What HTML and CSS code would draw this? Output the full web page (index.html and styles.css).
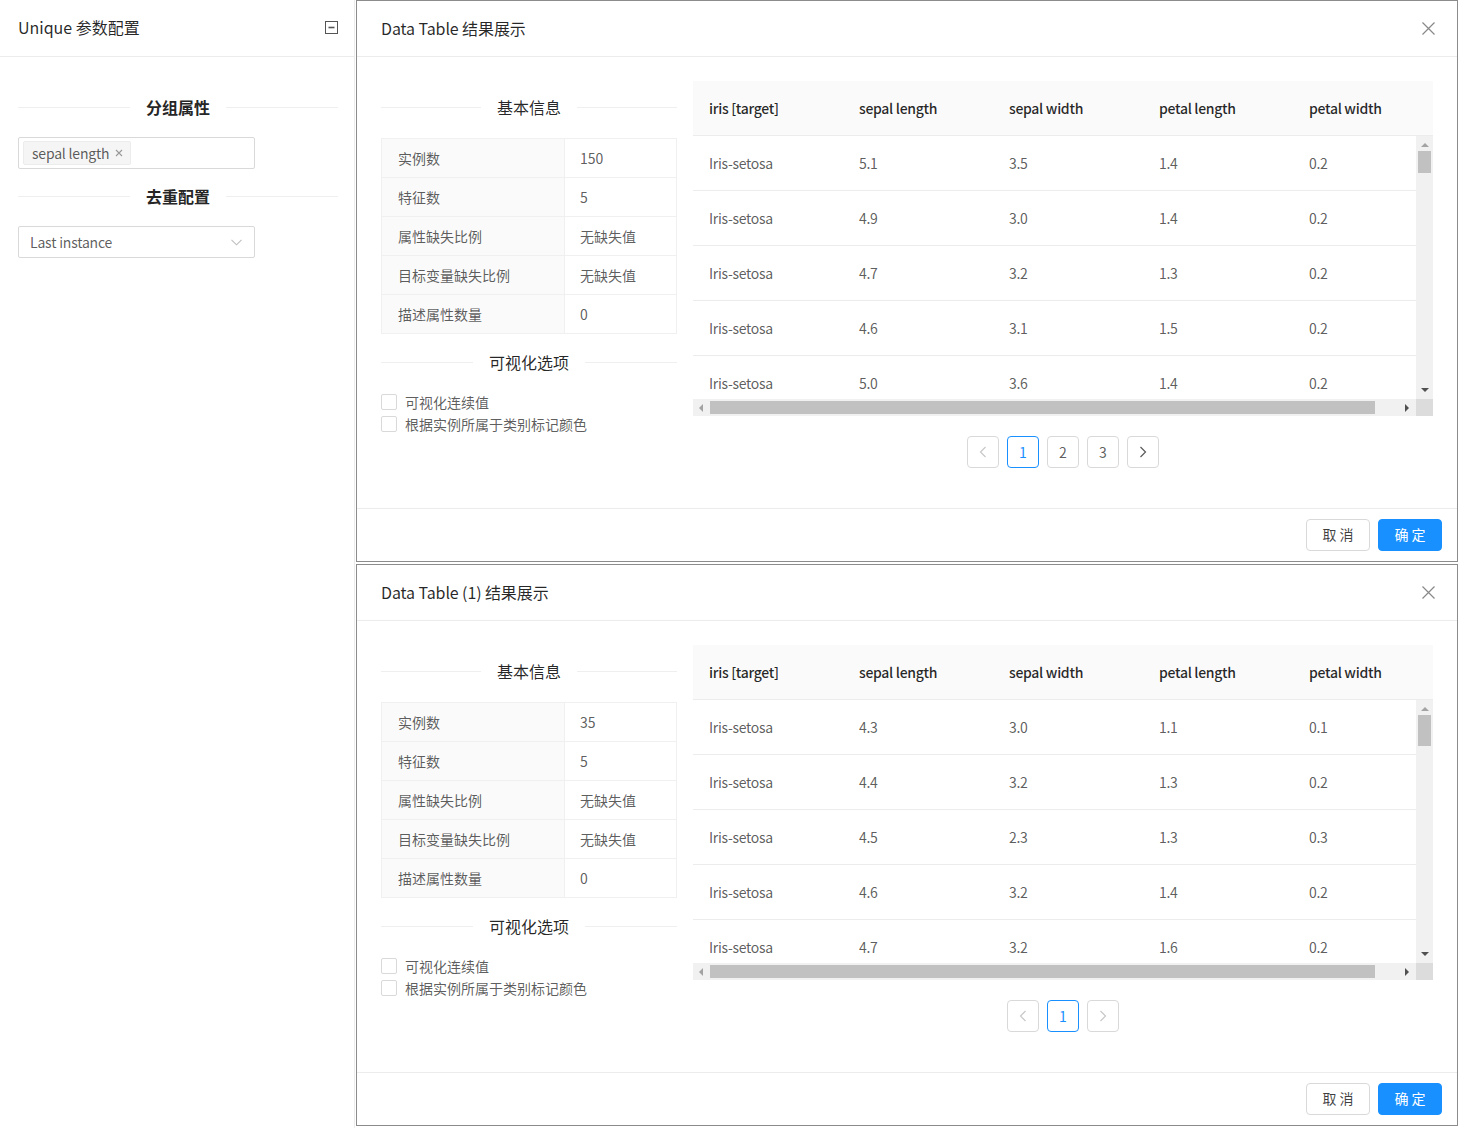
FILE: index.html
```html
<!DOCTYPE html>
<html lang="zh-CN">
<head>
<meta charset="utf-8">
<title>Unique 参数配置</title>
<link rel="stylesheet" href="styles.css">
</head>
<body>
<div class="app">
  <aside class="panel">
    <div class="panel-head">
      <span class="panel-title">Unique 参数配置</span>
      <svg class="collapse" width="13" height="13" viewBox="0 0 13 13"><rect x="0.5" y="0.5" width="12" height="12" fill="none" stroke="#555" stroke-width="1"/><path d="M3.5 6.5h6" stroke="#555" stroke-width="1.6"/></svg>
    </div>
    <div class="panel-body">
      <div class="divider strong"><span>分组属性</span></div>
      <div class="field">
        <span class="tag">sepal length<svg class="tag-x" width="8" height="8" viewBox="0 0 8 8"><path d="M1 1l6 6M7 1l-6 6" stroke="#999" stroke-width="1.1"/></svg></span>
      </div>
      <div class="divider strong"><span>去重配置</span></div>
      <div class="field select">
        <span>Last instance</span>
        <svg width="11" height="7" viewBox="0 0 11 7"><path d="M0.5 0.8l5 5 5-5" fill="none" stroke="#bfbfbf" stroke-width="1.1"/></svg>
      </div>
    </div>
  </aside>

  <main class="modals">
    <section class="modal">
      <header class="modal-head">
        <span class="modal-title">Data Table 结果展示</span>
        <svg class="close" width="13" height="13" viewBox="0 0 13 13"><path d="M0.5 0.5l12 12M12.5 0.5l-12 12" stroke="#888" stroke-width="1.2"/></svg>
      </header>
      <div class="modal-body">
        <div class="info">
          <div class="divider first"><span>基本信息</span></div>
          <div class="kv">
            <div class="kv-row"><div class="k">实例数</div><div class="v">150</div></div>
            <div class="kv-row"><div class="k">特征数</div><div class="v">5</div></div>
            <div class="kv-row"><div class="k">属性缺失比例</div><div class="v">无缺失值</div></div>
            <div class="kv-row"><div class="k">目标变量缺失比例</div><div class="v">无缺失值</div></div>
            <div class="kv-row"><div class="k">描述属性数量</div><div class="v">0</div></div>
          </div>
          <div class="divider second"><span>可视化选项</span></div>
          <label class="check"><span class="box"></span>可视化连续值</label>
          <label class="check"><span class="box"></span>根据实例所属于类别标记颜色</label>
        </div>
        <div class="data">
          <div class="grid">
            <div class="grid-head">
              <div class="c">iris [target]</div><div class="c">sepal length</div><div class="c">sepal width</div><div class="c">petal length</div><div class="c">petal width</div>
            </div>
            <div class="grid-mid">
              <div class="grid-body">
                <div class="r"><div class="c">Iris-setosa</div><div class="c">5.1</div><div class="c">3.5</div><div class="c">1.4</div><div class="c">0.2</div></div>
                <div class="r"><div class="c">Iris-setosa</div><div class="c">4.9</div><div class="c">3.0</div><div class="c">1.4</div><div class="c">0.2</div></div>
                <div class="r"><div class="c">Iris-setosa</div><div class="c">4.7</div><div class="c">3.2</div><div class="c">1.3</div><div class="c">0.2</div></div>
                <div class="r"><div class="c">Iris-setosa</div><div class="c">4.6</div><div class="c">3.1</div><div class="c">1.5</div><div class="c">0.2</div></div>
                <div class="r"><div class="c">Iris-setosa</div><div class="c">5.0</div><div class="c">3.6</div><div class="c">1.4</div><div class="c">0.2</div></div>
              </div>
              <div class="vbar"><span class="tri up"></span><span class="vthumb"></span><span class="vfill"></span><span class="tri down"></span></div>
            </div>
            <div class="grid-foot">
              <div class="hbar"><span class="tri left"></span><span class="hthumb"></span><span class="tri right"></span></div>
              <div class="corner"></div>
            </div>
          </div>
          <nav class="pager">
            <span class="pg off"><svg width="8" height="12" viewBox="0 0 8 12"><path d="M6.5 1l-5 5 5 5" fill="none" stroke="currentColor" stroke-width="1.2"/></svg></span>
            <span class="pg on">1</span>
            <span class="pg">2</span>
            <span class="pg">3</span>
            <span class="pg"><svg width="8" height="12" viewBox="0 0 8 12"><path d="M1.5 1l5 5-5 5" fill="none" stroke="currentColor" stroke-width="1.2"/></svg></span>
          </nav>
        </div>
      </div>
      <footer class="modal-foot">
        <button class="btn">取 消</button>
        <button class="btn primary">确 定</button>
      </footer>
    </section>

    <section class="modal">
      <header class="modal-head">
        <span class="modal-title">Data Table (1) 结果展示</span>
        <svg class="close" width="13" height="13" viewBox="0 0 13 13"><path d="M0.5 0.5l12 12M12.5 0.5l-12 12" stroke="#888" stroke-width="1.2"/></svg>
      </header>
      <div class="modal-body">
        <div class="info">
          <div class="divider first"><span>基本信息</span></div>
          <div class="kv">
            <div class="kv-row"><div class="k">实例数</div><div class="v">35</div></div>
            <div class="kv-row"><div class="k">特征数</div><div class="v">5</div></div>
            <div class="kv-row"><div class="k">属性缺失比例</div><div class="v">无缺失值</div></div>
            <div class="kv-row"><div class="k">目标变量缺失比例</div><div class="v">无缺失值</div></div>
            <div class="kv-row"><div class="k">描述属性数量</div><div class="v">0</div></div>
          </div>
          <div class="divider second"><span>可视化选项</span></div>
          <label class="check"><span class="box"></span>可视化连续值</label>
          <label class="check"><span class="box"></span>根据实例所属于类别标记颜色</label>
        </div>
        <div class="data">
          <div class="grid">
            <div class="grid-head">
              <div class="c">iris [target]</div><div class="c">sepal length</div><div class="c">sepal width</div><div class="c">petal length</div><div class="c">petal width</div>
            </div>
            <div class="grid-mid">
              <div class="grid-body">
                <div class="r"><div class="c">Iris-setosa</div><div class="c">4.3</div><div class="c">3.0</div><div class="c">1.1</div><div class="c">0.1</div></div>
                <div class="r"><div class="c">Iris-setosa</div><div class="c">4.4</div><div class="c">3.2</div><div class="c">1.3</div><div class="c">0.2</div></div>
                <div class="r"><div class="c">Iris-setosa</div><div class="c">4.5</div><div class="c">2.3</div><div class="c">1.3</div><div class="c">0.3</div></div>
                <div class="r"><div class="c">Iris-setosa</div><div class="c">4.6</div><div class="c">3.2</div><div class="c">1.4</div><div class="c">0.2</div></div>
                <div class="r"><div class="c">Iris-setosa</div><div class="c">4.7</div><div class="c">3.2</div><div class="c">1.6</div><div class="c">0.2</div></div>
              </div>
              <div class="vbar"><span class="tri up"></span><span class="vthumb big"></span><span class="vfill"></span><span class="tri down"></span></div>
            </div>
            <div class="grid-foot">
              <div class="hbar"><span class="tri left"></span><span class="hthumb"></span><span class="tri right"></span></div>
              <div class="corner"></div>
            </div>
          </div>
          <nav class="pager">
            <span class="pg off"><svg width="8" height="12" viewBox="0 0 8 12"><path d="M6.5 1l-5 5 5 5" fill="none" stroke="currentColor" stroke-width="1.2"/></svg></span>
            <span class="pg on">1</span>
            <span class="pg off"><svg width="8" height="12" viewBox="0 0 8 12"><path d="M1.5 1l5 5-5 5" fill="none" stroke="currentColor" stroke-width="1.2"/></svg></span>
          </nav>
        </div>
      </div>
      <footer class="modal-foot">
        <button class="btn">取 消</button>
        <button class="btn primary">确 定</button>
      </footer>
    </section>
  </main>
</div>
</body>
</html>
```
FILE: styles.css
```css
* { box-sizing: border-box; }
html, body { margin: 0; padding: 0; }
body {
  width: 1460px;
  height: 1128px;
  overflow: hidden;
  background: #fff;
  font-family: "Noto Sans CJK SC", "Noto Sans", sans-serif;
  font-size: 14px;
  color: rgba(0,0,0,.65);
}
.app { display: flex; height: 1128px; }

/* left panel */
.panel {
  width: 355px;
  flex: none;
  border-right: 1px solid #ececec;
}
.panel-head {
  height: 57px;
  border-bottom: 1px solid #ececec;
  display: flex;
  align-items: center;
  justify-content: space-between;
  padding: 0 16px 2px 18px;
}
.panel-title { font-size: 16px; color: rgba(0,0,0,.85); line-height: 22px; }
.collapse { margin-top: 0; }
.panel-body { padding: 39px 16px 0 18px; }
.divider {
  display: flex;
  align-items: center;
  height: 22px;
  font-size: 16px;
  color: rgba(0,0,0,.85);
  white-space: nowrap;
}
.divider::before, .divider::after {
  content: "";
  flex: 1;
  border-top: 1px solid #efefef;
}
.divider span { padding: 0 16px; line-height: 22px; }
.divider.strong { font-weight: 700; color: #262626; }
.panel-body .divider.strong + .field { margin-top: 19px; }
.panel-body .field + .divider { margin-top: 16px; }
.panel-body .divider + .field.select { margin-top: 19px; }
.field {
  width: 237px;
  height: 32px;
  border: 1px solid #d9d9d9;
  border-radius: 2px;
  display: flex;
  align-items: center;
  padding: 0 4px;
}
.tag {
  display: inline-flex;
  align-items: center;
  height: 24px;
  padding: 0 7px 0 8px;
  background: #f5f5f5;
  border: 1px solid #ececec;
  border-radius: 2px;
  color: rgba(0,0,0,.65);
  font-size: 14px;
  line-height: 22px;
  letter-spacing: -0.2px;
}
.tag-x { margin-left: 6px; }
.select { justify-content: space-between; padding: 0 12px 0 11px; color: rgba(0,0,0,.65); letter-spacing: -0.2px; }

/* modals */
.modals {
  margin-left: 1px;
  width: 1102px;
  display: flex;
  flex-direction: column;
  gap: 2px;
}
.modal {
  height: 562px;
  border: 1px solid #8c8c8c;
  display: flex;
  flex-direction: column;
  background: #fff;
}
.modal-head {
  height: 56px;
  flex: none;
  border-bottom: 1px solid #ececec;
  display: flex;
  align-items: center;
  justify-content: space-between;
  padding: 0 22px 2px 24px;
}
.modal-title { font-size: 16px; color: rgba(0,0,0,.85); line-height: 22px; letter-spacing: -0.1px; }
.close { margin-top: 1px; }
.modal-body {
  flex: 1;
  display: flex;
  gap: 16px;
  padding: 24px 23px 0 24px;
}
.info { width: 296px; flex: none; }
.divider.first { margin-top: 15px; margin-bottom: 20px; }
.divider.second { margin-top: 17px; margin-bottom: 18px; }
.kv { border: 1px solid #f0f0f0; border-bottom: none; }
.kv-row { display: flex; height: 39px; border-bottom: 1px solid #f0f0f0; }
.k {
  width: 183px;
  background: #fafafa;
  border-right: 1px solid #f0f0f0;
  padding-left: 16px;
  display: flex; align-items: center;
}
.v { flex: 1; padding-left: 15px; display: flex; align-items: center; }
.check { display: flex; align-items: center; height: 22px; line-height: 22px; }
.box {
  width: 16px; height: 16px;
  border: 1px solid #d9d9d9;
  border-radius: 2px;
  margin-right: 8px;
  background: #fff;
}

.data { width: 740px; flex: none; }
.grid { width: 740px; }
.grid-head {
  display: flex;
  height: 55px;
  background: #fafafa;
  border-bottom: 1px solid #ececec;
  overflow: hidden;
  color: rgba(0,0,0,.85);
  font-weight: 500;
}
.grid .c { letter-spacing: -0.3px; }
.grid-head .c { width: 150px; flex: none; padding-left: 16px; display: flex; align-items: center; }
.grid-mid { display: flex; height: 263px; }
.grid-body { width: 723px; overflow: hidden; }
.r { display: flex; height: 55px; border-bottom: 1px solid #ececec; width: 750px; }
.r .c { width: 150px; flex: none; padding-left: 16px; display: flex; align-items: center; }
.vbar {
  width: 17px;
  background: #f1f1f1;
  display: flex;
  flex-direction: column;
  align-items: center;
}
.vthumb { width: 13px; height: 22px; background: #c1c1c1; margin-top: 4px; flex: none; }
.vthumb.big { height: 31px; }
.vfill { flex: 1; }
.grid-foot { display: flex; height: 17px; }
.hbar {
  width: 723px;
  background: #f1f1f1;
  display: flex;
  align-items: center;
  padding: 0 6px;
}
.hthumb { height: 13px; width: 665px; background: #c1c1c1; margin-left: 7px; }
.corner { width: 17px; background: #dcdcdc; }
.tri { width: 0; height: 0; flex: none; border-style: solid; }
.tri.up { border-width: 0 4px 4px 4px; border-color: transparent transparent #a3a3a3 transparent; margin-top: 7px; }
.tri.down { border-width: 4px 4px 0 4px; border-color: #505050 transparent transparent transparent; margin-bottom: 7px; }
.tri.left { border-width: 4px 4px 4px 0; border-color: transparent #a3a3a3 transparent transparent; }
.tri.right { border-width: 4px 0 4px 4px; border-color: transparent transparent transparent #505050; margin-left: auto; margin-right: 1px; }

.pager {
  display: flex;
  justify-content: center;
  gap: 8px;
  margin-top: 20px;
}
.pg {
  width: 32px; height: 32px;
  border: 1px solid #d9d9d9;
  border-radius: 4px;
  display: flex; align-items: center; justify-content: center;
  color: rgba(0,0,0,.65);
  font-size: 14px;
}
.pg.on { border-color: #1890ff; color: #1890ff; }
.pg.off { color: #c8c8c8; }

.modal-foot {
  height: 53px;
  flex: none;
  border-top: 1px solid #ececec;
  display: flex;
  justify-content: flex-end;
  align-items: center;
  gap: 8px;
  padding: 0 15px 0 16px;
}
.btn {
  width: 64px; height: 32px;
  border: 1px solid #d9d9d9;
  border-radius: 4px;
  background: #fff;
  font-family: "Noto Sans CJK SC", sans-serif;
  font-size: 14px;
  line-height: 20px;
  color: rgba(0,0,0,.75);
  padding: 0 0 2px;
}
.btn.primary { background: #1890ff; border-color: #1890ff; color: #fff; }
```
